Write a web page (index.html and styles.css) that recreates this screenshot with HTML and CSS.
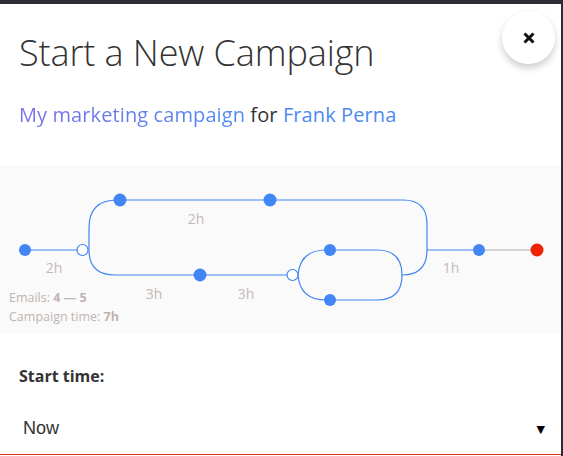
FILE: index.html
```html
<!DOCTYPE html>
<html>
<head>
<meta charset="utf-8">
<link rel="stylesheet" href="styles.css">
</head>
<body>
<div class="modal">
  <button class="close" aria-label="Close">
    <svg width="12" height="12" viewBox="0 0 12 12"><path d="M1.5 1.5 L10.5 10.5 M10.5 1.5 L1.5 10.5" stroke="#111" stroke-width="3" stroke-linecap="butt"/></svg>
  </button>
  <header class="head">
    <h1 class="title">Start a New Campaign</h1>
    <p class="sub"><a class="link link-grad">My marketing campaign</a> for <a class="link">Frank Perna</a></p>
  </header>
  <div class="diagram">
    <svg class="flow" width="561" height="169" viewBox="0 165 561 169">
      <g fill="none" stroke="#4285f4" stroke-width="1.2">
        <path d="M25 250 H77"/>
        <path d="M89 250 V228 Q89 200 117 200 H403 Q427 200 427 224 V250 H479"/>
        <path d="M89 250 Q89 275 115 275 H287"/>
        <path d="M298 275 Q300 250 326 250 H377 Q402 250 402 275 Q402 300 377 300 H326 Q300 300 298 275"/>
        <path d="M402 275 Q427 275 427 250"/>
      </g>
      <path d="M479 250 H537" stroke="#b0b0b0" stroke-width="1.2"/>
      <g fill="#4285f4">
        <circle cx="25" cy="250" r="6"/>
        <circle cx="120" cy="200" r="6.5"/>
        <circle cx="270" cy="200" r="6.5"/>
        <circle cx="200" cy="275" r="6.5"/>
        <circle cx="330" cy="250" r="6"/>
        <circle cx="330" cy="300" r="6"/>
        <circle cx="479" cy="250" r="6"/>
      </g>
      <circle cx="82.5" cy="250" r="5.5" fill="#fff" stroke="#4285f4" stroke-width="1.2"/>
      <circle cx="292.5" cy="275" r="5.5" fill="#fff" stroke="#4285f4" stroke-width="1.2"/>
      <circle cx="537" cy="250" r="6.5" fill="#ee2200"/>
      <g class="dur">
        <text x="54" y="273" text-anchor="middle">2h</text>
        <text x="196" y="224" text-anchor="middle">2h</text>
        <text x="154" y="299" text-anchor="middle">3h</text>
        <text x="246" y="299" text-anchor="middle">3h</text>
        <text x="451" y="273" text-anchor="middle">1h</text>
      </g>
    </svg>
    <div class="stats">
      <div>Emails: <b>4 — 5</b></div>
      <div>Campaign time: <b>7h</b></div>
    </div>
  </div>
  <div class="field">
    <div class="label">Start time:</div>
    <div class="select"><span class="value">Now</span><span class="arrow">▼</span></div>
  </div>
</div>
</body>
</html>
```
FILE: styles.css
```css
html, body {
  margin: 0;
  padding: 0;
}
body {
  background: #2d2b33;
  font-family: "Open Sans", "Noto Sans", "DejaVu Sans", sans-serif;
  width: 563px;
  height: 456px;
  overflow: hidden;
}
.modal {
  position: relative;
  margin-top: 4px;
  width: 561px;
  height: 452px;
  background: #fff;
  display: flex;
  flex-direction: column;
}
.close {
  position: absolute;
  left: 502px;
  top: 7px;
  width: 53px;
  height: 53px;
  border-radius: 50%;
  border: none;
  background: #fff;
  box-shadow: 0 4px 7px rgba(0,0,0,0.2);
  display: flex;
  align-items: center;
  justify-content: center;
  padding: 0;
}
.head {
  height: 161px;
  padding: 0 0 0 19px;
  box-sizing: border-box;
}
.title {
  margin: 0;
  padding-top: 25px;
  font-size: 36px;
  font-weight: 300;
  line-height: 48px;
  color: #333;
  letter-spacing: -0.1px;
}
.sub {
  margin: 23px 0 0;
  font-size: 20px;
  line-height: 30px;
  color: #333;
  letter-spacing: 0.1px;
}
.link {
  color: #4d8af0;
}
.link-grad {
  background: linear-gradient(90deg, #7c6fe6, #4f8af2);
  -webkit-background-clip: text;
  background-clip: text;
  color: transparent;
}
.diagram {
  position: relative;
  height: 169px;
  background: #fafafa;
}
.flow {
  display: block;
}
.dur text {
  font-family: "Open Sans", "Noto Sans", sans-serif;
  font-size: 14px;
  fill: #c4b8b5;
}
.stats {
  position: absolute;
  left: 9px;
  top: 123px;
  font-size: 12.5px;
  line-height: 19px;
  color: #c0b4b1;
}
.stats b {
  font-weight: 700;
}
.field {
  padding: 0 0 0 19px;
  display: flex;
  flex-direction: column;
}
.label {
  margin-top: 30px;
  font-size: 16px;
  font-weight: 700;
  line-height: 24px;
  color: #333;
}
.select {
  margin: 17px 0 0 -19px;
  padding: 0 16px 2px 23px;
  height: 50px;
  box-sizing: border-box;
  display: flex;
  align-items: center;
  justify-content: space-between;
  border-bottom: 1px solid #e0301e;
}
.value {
  font-size: 18px;
  color: #333;
  font-family: "Liberation Sans", "Open Sans", sans-serif;
}
.arrow {
  font-size: 11px;
  color: #000;
}
```
